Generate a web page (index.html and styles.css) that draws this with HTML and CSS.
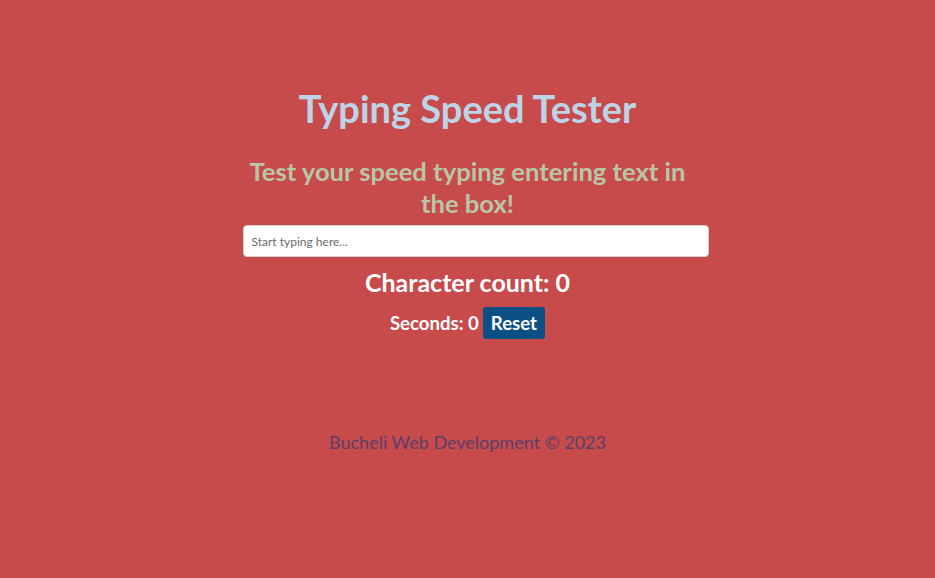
FILE: index.html
```html
<!DOCTYPE html>
<html lang="en">
<head>
<meta charset="utf-8">
<title>Typing Speed Tester</title>
<link rel="stylesheet" href="styles.css">
</head>
<body>
<main class="page">
  <h1 class="title">Typing Speed Tester</h1>
  <h2 class="subtitle">Test your speed typing entering text in the box!</h2>
  <input class="typing-input" type="text" placeholder="Start typing here...">
  <h3 class="count">Character count: 0</h3>
  <div class="timer-row">
    <span class="seconds">Seconds: 0</span>
    <button class="reset" type="button">Reset</button>
  </div>
  <footer class="footer">Bucheli Web Development © 2023</footer>
</main>
</body>
</html>
```
FILE: styles.css
```css
html, body {
  margin: 0;
  padding: 0;
}
body {
  background: #c84b4c;
  font-family: Lato, "Open Sans", sans-serif;
  height: 578px;
}
.page {
  width: 466px;
  margin: 0 auto;
  padding-top: 84px;
  display: flex;
  flex-direction: column;
  align-items: center;
  text-align: center;
}
.title {
  margin: 0;
  font-size: 38px;
  line-height: 48px;
  font-weight: 700;
  color: #bcd4e6;
}
.subtitle {
  margin: 23px 0 0;
  width: 445px;
  font-size: 25.6px;
  line-height: 32px;
  font-weight: 700;
  color: #b8c6a8;
}
.typing-input {
  box-sizing: border-box;
  width: 466px;
  height: 32px;
  margin-top: 6px;
  margin-left: 16px;
  padding: 0 8px;
  border: 1px solid #d0d0d0;
  border-radius: 4px;
  background: #fff;
  font-family: inherit;
  font-size: 12px;
  color: #333;
  outline: none;
}
.typing-input::placeholder {
  color: #6b6b6b;
}
.count {
  margin: 9px 0 0;
  font-size: 25px;
  line-height: 32px;
  font-weight: 700;
  color: #fff;
}
.timer-row {
  margin-top: 9px;
  display: flex;
  align-items: center;
  gap: 4px;
}
.seconds {
  font-size: 18.6px;
  font-weight: 700;
  color: #fff;
}
.reset {
  height: 32px;
  padding: 0 8px;
  border: none;
  border-radius: 3px;
  background: #0b4f84;
  color: #fff;
  font-family: inherit;
  font-size: 18.6px;
  font-weight: 700;
}
.footer {
  margin-top: 92px;
  font-size: 18px;
  color: #5a3f6a;
}
```
